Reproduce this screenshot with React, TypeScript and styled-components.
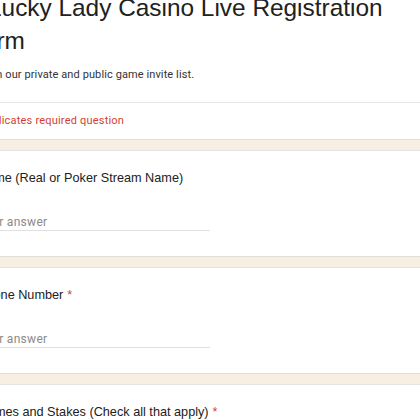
import React from 'react';
import styled, { createGlobalStyle } from 'styled-components';

const GlobalStyle = createGlobalStyle`
  html, body {
    margin: 0;
    padding: 0;
    background: #f6efe2;
    overflow: hidden;
  }
`;

const Page = styled.div`
  display: flex;
  flex-direction: column;
  gap: 10px;
  width: 490px;
  margin: -10px 0 0 -42px;
`;

const Card = styled.section`
  background: #ffffff;
  border-top: 1px solid #e4e4e4;
  border-bottom: 1px solid #e2ddd4;
`;

const HeaderTop = styled.div`
  padding: 0 20px 19px;
`;

// the first line sits a little further in than the wrapped line
const FormTitle = styled.h1`
  margin: 0 0 0 -10px;
  text-indent: 20px;
  font-family: 'Liberation Sans', Arial, sans-serif;
  font-weight: 400;
  font-size: 24.4px;
  line-height: 33px;
  color: #212121;
`;

const Description = styled.p`
  margin: 10px 0 0 3px;
  font-family: Roboto, 'Liberation Sans', sans-serif;
  font-size: 11px;
  line-height: 16px;
  letter-spacing: 0.1px;
  color: #333333;
`;

const RequiredNote = styled.div`
  border-top: 1px solid #e6e6e6;
  padding: 10px 20px 10px;
  font-family: Roboto, 'Liberation Sans', sans-serif;
  font-size: 11px;
  line-height: 16px;
  letter-spacing: 0.2px;
  color: #d23f31;
`;

const QuestionCard = styled(Card)`
  padding: 18px 20px 25px;
`;

const QuestionTitle = styled.div`
  font-family: 'Liberation Sans', Arial, sans-serif;
  font-size: 12.7px;
  line-height: 18px;
  color: #212121;
`;

const Asterisk = styled.span`
  color: #d23f31;
  margin-left: 4px;
`;

const AnswerInput = styled.input`
  display: block;
  box-sizing: border-box;
  width: 232px;
  height: 17px;
  margin-top: 27px;
  padding: 0 0 1px;
  border: none;
  border-bottom: 1px solid #e0e0e0;
  background: transparent;
  font-family: Roboto, 'Liberation Sans', sans-serif;
  font-size: 12px;
  line-height: 16px;
  letter-spacing: 0.3px;
  color: #212121;
  outline: none;

  &::placeholder {
    color: #8a8a8a;
  }
`;

interface Question {
  title: string;
  required?: boolean;
  input?: boolean;
}

const questions: Question[] = [
  { title: 'Name (Real or Poker Stream Name)', input: true },
  { title: 'Phone Number', required: true, input: true },
  { title: 'Games and Stakes (Check all that apply)', required: true },
];

export default function App() {
  return (
    <>
      <GlobalStyle />
      <Page>
        <Card>
          <HeaderTop>
            <FormTitle>Lucky Lady Casino Live Registration Form</FormTitle>
            <Description>Join our private and public game invite list.</Description>
          </HeaderTop>
          <RequiredNote>* Indicates required question</RequiredNote>
        </Card>
        {questions.map(q => (
          <QuestionCard key={q.title}>
            <QuestionTitle>
              {q.title}
              {q.required && <Asterisk>*</Asterisk>}
            </QuestionTitle>
            {q.input && <AnswerInput type="text" placeholder="Your answer" />}
          </QuestionCard>
        ))}
      </Page>
    </>
  );
}
